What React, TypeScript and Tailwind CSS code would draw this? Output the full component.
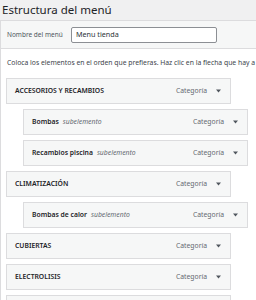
import React from 'react'

interface MenuItem {
  id: number
  title: string
  depth: 0 | 1
}

const items: MenuItem[] = [
  { id: 1, title: 'ACCESORIOS Y RECAMBIOS', depth: 0 },
  { id: 2, title: 'Bombas', depth: 1 },
  { id: 3, title: 'Recambios piscina', depth: 1 },
  { id: 4, title: 'CLIMATIZACIÓN', depth: 0 },
  { id: 5, title: 'Bombas de calor', depth: 1 },
  { id: 6, title: 'CUBIERTAS', depth: 0 },
  { id: 7, title: 'ELECTROLISIS', depth: 0 },
  { id: 8, title: 'FILTRACIÓN', depth: 0 },
]

const Arrow = (): React.ReactElement => (
  <svg width="5" height="4" viewBox="0 0 5 4" className="shrink-0">
    <path d="M0 0.5h5L2.5 3.5z" fill="#50575e" />
  </svg>
)

const ItemBar = ({ item }: { item: MenuItem }): React.ReactElement => (
  <div
    className={`flex items-center h-[26px] w-[225px] shrink-0 border border-[#dcdcde] bg-[#f6f7f7] pl-[8px] pr-[9px] ${
      item.depth === 1 ? 'ml-[22px]' : 'ml-[5px]'
    }`}
  >
    <span className="text-[6.8px] font-semibold text-[#1d2327] whitespace-nowrap">{item.title}</span>
    {item.depth === 1 && (
      <span className="ml-[4px] text-[6.8px] italic text-[#646970] whitespace-nowrap">subelemento</span>
    )}
    <span className="ml-auto text-[6.8px] text-[#646970]">Categoría</span>
    <span className="ml-[9px] flex items-center">
      <Arrow />
    </span>
  </div>
)

export default function App(): React.ReactElement {
  return (
    <div className="w-[256px] h-[300px] overflow-hidden bg-[#f0f0f1] font-['Noto_Sans',sans-serif]">
      <div className="h-[20px] pl-[2px] flex items-center text-[11.5px] leading-none text-[#1d2327]">
        Estructura del menú
      </div>
      <div className="border-l border-t border-[#dcdcde] bg-white h-[280px]">
        <div className="h-[28px] flex items-center pl-[6px] bg-[#f6f7f7] border-b border-[#dcdcde]">
          <span className="text-[6.5px] text-[#50575e] w-[64px] whitespace-nowrap">Nombre del menú</span>
          <div className="w-[146px] h-[16px] flex items-center pl-[4px] bg-white border border-[#8c8f94] rounded-[2px] text-[7.2px] text-[#2c3338]">
            Menu tienda
          </div>
        </div>
        <p className="pl-[6px] pt-[9px] text-[6.8px] leading-[10px] text-[#3c434a] whitespace-nowrap">
          Coloca los elementos en el orden que prefieras. Haz clic en la flecha que hay a la derecha del elemento
        </p>
        <div className="mt-[10px] flex flex-col gap-[5px]">
          {items.map((item) => (
            <ItemBar key={item.id} item={item} />
          ))}
        </div>
      </div>
    </div>
  )
}
